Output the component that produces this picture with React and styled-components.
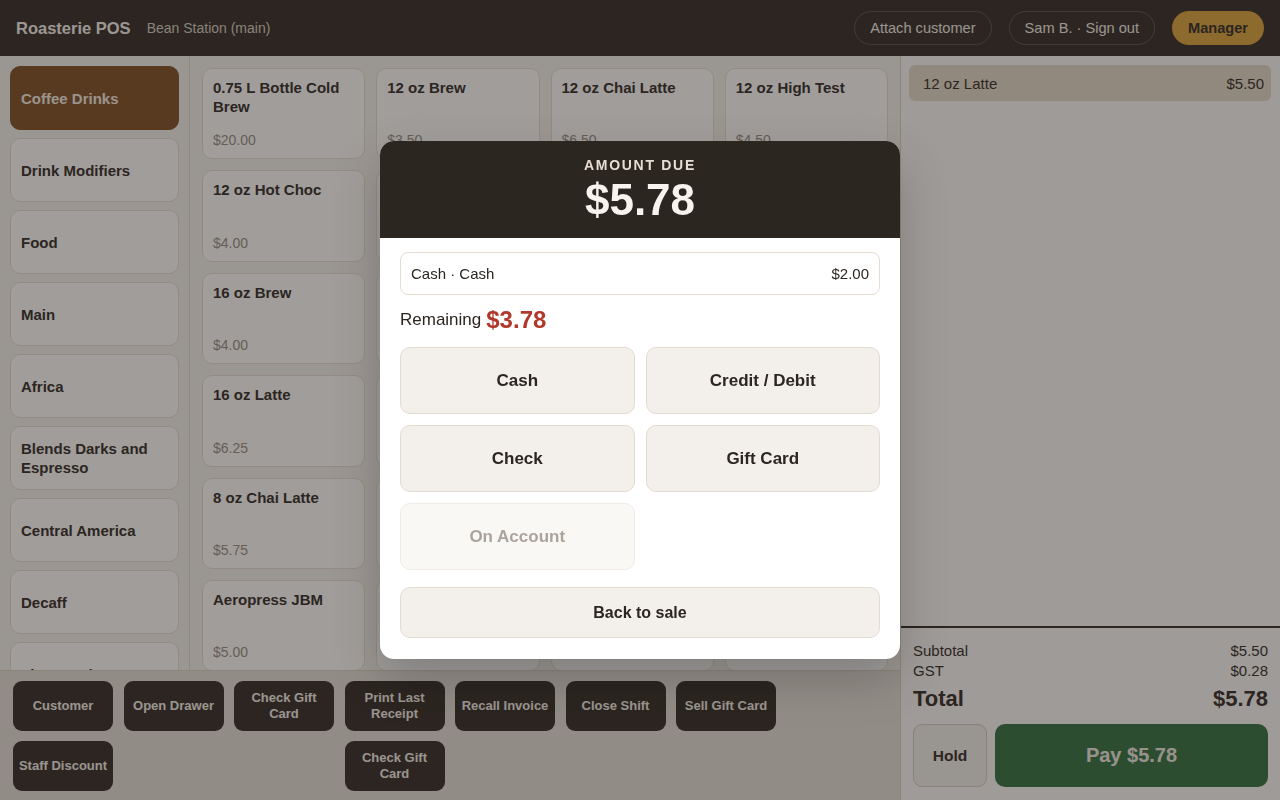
import React, { useState } from 'react';
import styled, { createGlobalStyle } from 'styled-components';

const GlobalStyle = createGlobalStyle`
  *, *::before, *::after { box-sizing: border-box; }
  html, body { margin: 0; padding: 0; height: 100%; }
  body {
    font-family: "Liberation Sans", Arial, sans-serif;
    color: #2c2621;
    background: #f5f2ed;
  }
  button { font-family: inherit; }
`;

const ink = '#2c2621';

const categories = [
  'Coffee Drinks', 'Drink Modifiers', 'Food', 'Main', 'Africa',
  'Blends Darks and Espresso', 'Central America', 'Decaff', 'Flavoured', 'Merchandise'
];

const products = [
  ['0.75 L Bottle Cold Brew', '$20.00'], ['12 oz Brew', '$3.50'], ['12 oz Chai Latte', '$6.50'], ['12 oz High Test', '$4.50'],
  ['12 oz Hot Choc', '$4.00'], ['12 oz Latte', '$5.50'], ['12 oz Mocha', '$6.00'], ['12 oz Tea', '$3.75'],
  ['16 oz Brew', '$4.00'], ['16 oz Chai Latte', '$7.25'], ['16 oz High Test', '$5.25'], ['16 oz Hot Choc', '$4.75'],
  ['16 oz Latte', '$6.25'], ['16 oz Mocha', '$6.75'], ['16 oz Tea', '$4.25'], ['8 oz Brew', '$3.00'],
  ['8 oz Chai Latte', '$5.75'], ['8 oz Hot Choc', '$3.50'], ['8 oz Latte', '$4.75'], ['8 oz Mocha', '$5.00'],
  ['Aeropress JBM', '$5.00'], ['Americano', '$4.00'], ['Cappuccino', '$4.75'], ['Cortado', '$4.25'],
];

// col / row placement of the quick actions
const actions = [
  { label: 'Customer', col: 1, row: 1 },
  { label: 'Open Drawer', col: 2, row: 1 },
  { label: 'Check Gift Card', col: 3, row: 1 },
  { label: 'Print Last Receipt', col: 4, row: 1 },
  { label: 'Recall Invoice', col: 5, row: 1 },
  { label: 'Close Shift', col: 6, row: 1 },
  { label: 'Sell Gift Card', col: 7, row: 1 },
  { label: 'Staff Discount', col: 1, row: 2 },
  { label: 'Check Gift Card', col: 4, row: 2 },
];

const Screen = styled.div`
  height: 100vh;
  display: flex;
  flex-direction: column;
  overflow: hidden;
`;

const TopBar = styled.header`
  height: 56px;
  flex-shrink: 0;
  background: ${ink};
  display: flex;
  align-items: center;
  justify-content: space-between;
  padding: 0 16px;
`;

const Brand = styled.div`
  display: flex;
  align-items: center;
  gap: 16px;
`;

const Title = styled.span`
  font-size: 16.5px;
  font-weight: 700;
  color: #f7f3ee;
`;

const Store = styled.span`
  font-size: 14px;
  color: #d6cfc5;
`;

const TopActions = styled.div`
  display: flex;
  align-items: center;
  gap: 17px;
`;

const Pill = styled.button`
  height: 34px;
  padding: 0 15px;
  border-radius: 17px;
  font-size: 14.6px;
  font-weight: ${p => (p.$accent ? 700 : 400)};
  color: ${p => (p.$accent ? ink : '#f5f0ea')};
  background: ${p => (p.$accent ? '#dca43a' : 'transparent')};
  border: 1px solid ${p => (p.$accent ? 'transparent' : 'rgba(245, 240, 234, 0.2)')};
`;

const Body = styled.div`
  flex: 1;
  min-height: 0;
  display: flex;
`;

const SalePane = styled.div`
  flex: 1;
  min-width: 0;
  display: flex;
  flex-direction: column;
`;

const Browse = styled.div`
  flex: 1;
  min-height: 0;
  display: flex;
`;

const Categories = styled.nav`
  width: 190px;
  flex-shrink: 0;
  border-right: 1px solid #e4dbd0;
  padding: 10px;
  display: flex;
  flex-direction: column;
  gap: 8px;
  overflow: hidden;
`;

const Category = styled.button`
  height: 64px;
  flex-shrink: 0;
  text-align: left;
  padding: 0 10px;
  border-radius: 10px;
  font-size: 15px;
  font-weight: 700;
  line-height: 19px;
  background: ${p => (p.$active ? '#7c4b20' : '#ffffff')};
  color: ${p => (p.$active ? '#f5ede3' : ink)};
  border: 1px solid ${p => (p.$active ? '#7c4b20' : '#e8dfd4')};
`;

const Products = styled.div`
  flex: 1;
  padding: 12px;
  display: grid;
  grid-template-columns: repeat(4, 1fr);
  grid-auto-rows: 91.4px;
  gap: 11px;
  overflow: hidden;
  align-content: start;
`;

const Product = styled.div`
  background: #ffffff;
  border: 1px solid #e8dfd4;
  border-radius: 10px;
  padding: 9px 10px 9px;
  display: flex;
  flex-direction: column;
  justify-content: space-between;
`;

const ProductName = styled.div`
  font-size: 15px;
  font-weight: 700;
  line-height: 19px;
`;

const ProductPrice = styled.div`
  font-size: 14px;
  line-height: 17px;
  color: #958c83;
`;

const ActionBar = styled.div`
  height: 130px;
  flex-shrink: 0;
  background: #e6e1da;
  border-top: 1px solid #dbd1c5;
  padding: 10px 13px 0;
  display: grid;
  grid-template-columns: repeat(7, 100px);
  grid-template-rows: repeat(2, 50px);
  column-gap: 10.5px;
  row-gap: 10px;
`;

const ActionButton = styled.button`
  grid-column: ${p => p.$col};
  grid-row: ${p => p.$row};
  background: ${ink};
  color: #f5f0ea;
  border: none;
  border-radius: 9px;
  font-size: 13px;
  font-weight: 700;
  line-height: 16px;
  padding: 0 2px;
`;

const Cart = styled.aside`
  width: 380px;
  flex-shrink: 0;
  border-left: 1px solid #ddd3c7;
  background: #fdfcfa;
  display: flex;
  flex-direction: column;
`;

const Lines = styled.div`
  flex: 1;
  padding: 9px 9px 9px 8px;
`;

const Line = styled.div`
  height: 36px;
  border-radius: 6px;
  background: #e6dacb;
  display: flex;
  align-items: center;
  justify-content: space-between;
  padding: 0 7px 0 14px;
  font-size: 15px;
`;

const Totals = styled.div`
  border-top: 2px solid ${ink};
  padding: 12px 12px 13px;
`;

const SumRow = styled.div`
  display: flex;
  justify-content: space-between;
  align-items: center;
  height: ${p => (p.$big ? '30px' : '20px')};
  margin-top: ${p => (p.$big ? '4px' : '0')};
  font-size: ${p => (p.$big ? '22px' : '15px')};
  font-weight: ${p => (p.$big ? 700 : 400)};
`;

const CartButtons = styled.div`
  display: flex;
  gap: 8px;
  margin-top: 10px;
  height: 63px;
`;

const HoldButton = styled.button`
  width: 74px;
  background: #f3f0eb;
  border: 1px solid #d8ccbd;
  border-radius: 9px;
  font-size: 15.5px;
  font-weight: 700;
  color: ${ink};
`;

const PayButton = styled.button`
  flex: 1;
  background: #2f6e3e;
  border: none;
  border-radius: 10px;
  font-size: 20px;
  font-weight: 700;
  color: #f0ece6;
`;

const Overlay = styled.div`
  position: fixed;
  inset: 0;
  background: rgba(44, 38, 33, 0.45);
  display: flex;
  align-items: center;
  justify-content: center;
`;

const Modal = styled.div`
  width: 520px;
  background: #ffffff;
  border-radius: 14px;
  overflow: hidden;
  box-shadow: 0 20px 50px rgba(0, 0, 0, 0.2);
`;

const ModalHead = styled.div`
  background: ${ink};
  padding: 16px 0;
  text-align: center;
`;

const DueLabel = styled.div`
  font-size: 14px;
  line-height: 17px;
  font-weight: 700;
  letter-spacing: 1.7px;
  color: #e6ded3;
  margin-bottom: 4px;
`;

const DueAmount = styled.div`
  font-size: 44px;
  line-height: 44px;
  font-weight: 700;
  color: #f7f3ee;
`;

const ModalBody = styled.div`
  padding: 14px 20px 21px;
`;

const Tender = styled.div`
  height: 43px;
  border: 1px solid #e6ddd2;
  border-radius: 8px;
  display: flex;
  align-items: center;
  justify-content: space-between;
  padding: 0 10px;
  font-size: 15px;
`;

const Remaining = styled.div`
  margin: 11px 0 13px;
  height: 28px;
  display: flex;
  align-items: center;
  gap: 5px;
  font-size: 17px;
`;

const RemainingAmount = styled.span`
  font-size: 24px;
  font-weight: 700;
  color: #b0392b;
`;

const Methods = styled.div`
  display: grid;
  grid-template-columns: 1fr 1fr;
  grid-auto-rows: 67px;
  gap: 11px;
`;

const Method = styled.button`
  border-radius: 10px;
  font-size: 17px;
  font-weight: 700;
  background: ${p => (p.disabled ? '#faf8f5' : '#f3f0eb')};
  border: 1px solid ${p => (p.disabled ? '#f0ebe5' : '#e3dbd0')};
  color: ${p => (p.disabled ? '#aba49c' : ink)};
`;

const BackButton = styled.button`
  width: 100%;
  height: 51px;
  margin-top: 17px;
  border-radius: 10px;
  background: #f3f0eb;
  border: 1px solid #e3dbd0;
  font-size: 16px;
  font-weight: 700;
  color: ${ink};
`;

const App = () => {
  const [active] = useState('Coffee Drinks');

  return (
    <>
      <GlobalStyle />
      <Screen>
        <TopBar>
          <Brand>
            <Title>Roasterie POS</Title>
            <Store>Bean Station (main)</Store>
          </Brand>
          <TopActions>
            <Pill>Attach customer</Pill>
            <Pill>Sam B. · Sign out</Pill>
            <Pill $accent>Manager</Pill>
          </TopActions>
        </TopBar>

        <Body>
          <SalePane>
            <Browse>
              <Categories>
                {categories.map(c => (
                  <Category key={c} $active={c === active}>{c}</Category>
                ))}
              </Categories>
              <Products>
                {products.map(([name, price]) => (
                  <Product key={name}>
                    <ProductName>{name}</ProductName>
                    <ProductPrice>{price}</ProductPrice>
                  </Product>
                ))}
              </Products>
            </Browse>
            <ActionBar>
              {actions.map(a => (
                <ActionButton key={a.label + a.row} $col={a.col} $row={a.row}>
                  {a.label}
                </ActionButton>
              ))}
            </ActionBar>
          </SalePane>

          <Cart>
            <Lines>
              <Line>
                <span>12 oz Latte</span>
                <span>$5.50</span>
              </Line>
            </Lines>
            <Totals>
              <SumRow><span>Subtotal</span><span>$5.50</span></SumRow>
              <SumRow><span>GST</span><span>$0.28</span></SumRow>
              <SumRow $big><span>Total</span><span>$5.78</span></SumRow>
              <CartButtons>
                <HoldButton>Hold</HoldButton>
                <PayButton>Pay $5.78</PayButton>
              </CartButtons>
            </Totals>
          </Cart>
        </Body>
      </Screen>

      <Overlay>
        <Modal>
          <ModalHead>
            <DueLabel>AMOUNT DUE</DueLabel>
            <DueAmount>$5.78</DueAmount>
          </ModalHead>
          <ModalBody>
            <Tender>
              <span>Cash · Cash</span>
              <span>$2.00</span>
            </Tender>
            <Remaining>
              Remaining <RemainingAmount>$3.78</RemainingAmount>
            </Remaining>
            <Methods>
              <Method>Cash</Method>
              <Method>Credit / Debit</Method>
              <Method>Check</Method>
              <Method>Gift Card</Method>
              <Method disabled>On Account</Method>
            </Methods>
            <BackButton>Back to sale</BackButton>
          </ModalBody>
        </Modal>
      </Overlay>
    </>
  );
};

export default App;
